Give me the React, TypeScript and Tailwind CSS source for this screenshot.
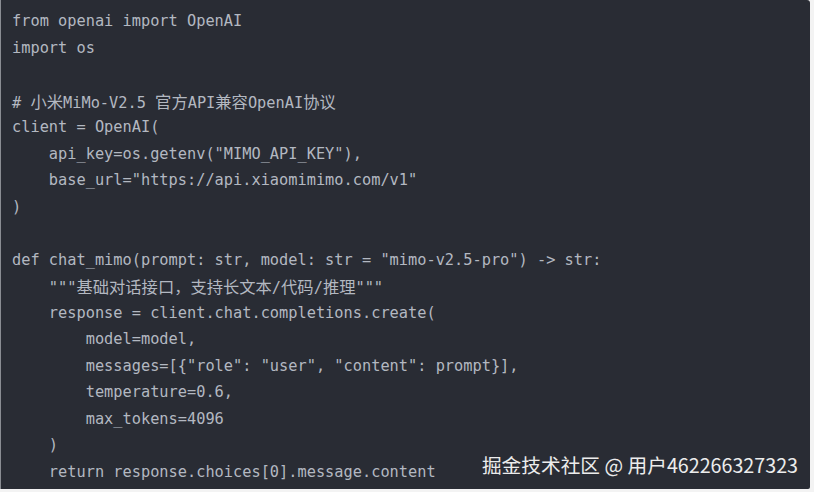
import React from 'react'

const lines: string[] = [
    'from openai import OpenAI',
    'import os',
    '',
    '# 小米MiMo-V2.5 官方API兼容OpenAI协议',
    'client = OpenAI(',
    '    api_key=os.getenv("MIMO_API_KEY"),',
    '    base_url="https://api.xiaomimimo.com/v1"',
    ')',
    '',
    'def chat_mimo(prompt: str, model: str = "mimo-v2.5-pro") -> str:',
    '    """基础对话接口，支持长文本/代码/推理"""',
    '    response = client.chat.completions.create(',
    '        model=model,',
    '        messages=[{"role": "user", "content": prompt}],',
    '        temperature=0.6,',
    '        max_tokens=4096',
    '    )',
    '    return response.choices[0].message.content',
]

// split a line into runs so the chinese parts get a cjk font
const splitRuns = (line: string) => {
    const parts = line.split(/([\u3000-\u9fff\uff00-\uffef]+)/)
    return parts.map((p, i) => {
        if (!p) return null
        if (/[\u3000-\u9fff\uff00-\uffef]/.test(p)) {
            return (
                <span key={i} className="font-['Noto_Sans_CJK_SC',sans-serif] text-[16.3px]">
                    {p}
                </span>
            )
        }
        return <span key={i}>{p}</span>
    })
}

const App = () => {
    return (
        <div className="w-[814px] h-[492px] bg-[#f3f3f3] overflow-hidden">
            <div className="relative w-[810px] h-[489px] bg-[#292c34] border-l border-[#8a8d93] rounded-tr-[3px] rounded-br-[2px] pl-[11px] pt-[8px]">
                {/* code */}
                <div className="font-['DejaVu_Sans_Mono',monospace] text-[15.3px] leading-[26.5px] text-[#b3b8c1]">
                    {lines.map((line, i) => (
                        <div key={i} className="h-[26.5px] whitespace-pre">
                            {line === '' ? ' ' : splitRuns(line)}
                        </div>
                    ))}
                </div>

                {/* watermark */}
                <div className="absolute right-[12px] top-[455px] font-['Noto_Sans_CJK_SC',sans-serif] text-[19.7px] leading-none text-[#ececec]">
                    掘金技术社区 @ 用户462266327323
                </div>
            </div>
        </div>
    )
}

export default App
